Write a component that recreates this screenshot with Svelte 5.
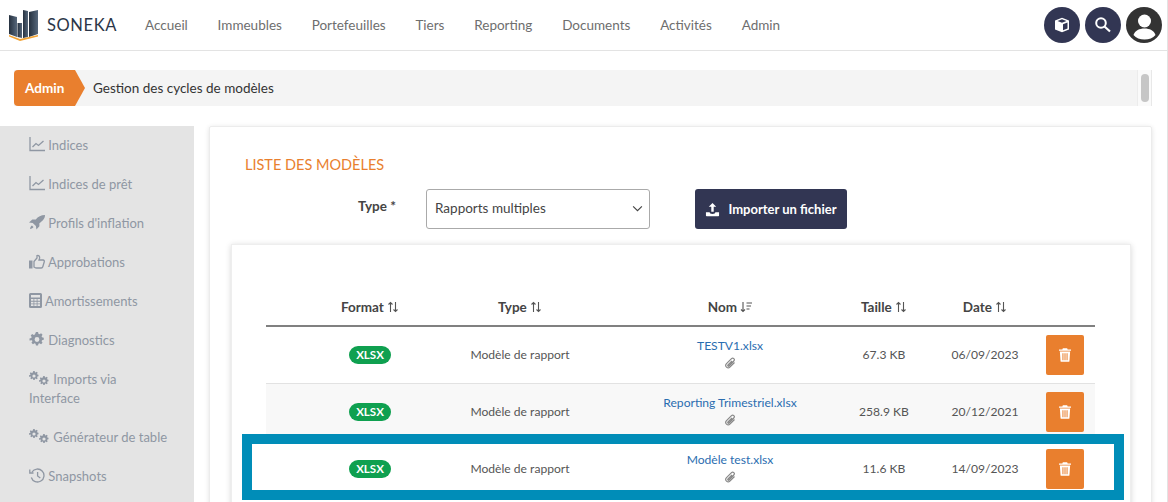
<script>
    const nav = ["Accueil", "Immeubles", "Portefeuilles", "Tiers", "Reporting", "Documents", "Activités", "Admin"];

    const side = [
        { label: "Indices", icon: "chart" },
        { label: "Indices de prêt", icon: "chart" },
        { label: "Profils d'inflation", icon: "rocket" },
        { label: "Approbations", icon: "thumb" },
        { label: "Amortissements", icon: "calc" },
        { label: "Diagnostics", icon: "gear" },
        { label: "Imports via Interface", icon: "gears" },
        { label: "Générateur de table", icon: "gears" },
        { label: "Snapshots", icon: "history" }
    ];

    const rows = [
        { name: "TESTV1.xlsx", size: "67.3 KB", date: "06/09/2023" },
        { name: "Reporting Trimestriel.xlsx", size: "258.9 KB", date: "20/12/2021" },
        { name: "Modèle test.xlsx", size: "11.6 KB", date: "14/09/2023" }
    ];

    const gearPath = "M8.600 0h2.800l.5 2.300 1.500.6 2-1.300 2 2-1.300 2 .6 1.500 2.300.5v2.800l-2.300.5-.6 1.500 1.300 2-2 2-2-1.300-1.500.6-.5 2.300H8.600l-.5-2.300-1.500-.6-2 1.300-2-2 1.300-2-.6-1.500L0 11.400V8.600l2.300-.5.6-1.500-1.300-2 2-2 2 1.300 1.500-.6zM10 6.800a3.200 3.200 0 1 0 0 6.400 3.200 3.200 0 0 0 0-6.400z";
</script>

{#snippet sortIcon()}
    <svg class="sort" viewBox="0 0 12 12" aria-hidden="true">
        <path d="M3.500 11V1.500M1.500 3.500l2-2 2 2M8.500 1v9.500M6.500 8.500l2 2 2-2" />
    </svg>
{/snippet}

{#snippet sideIcon(kind)}
    {#if kind === "chart"}
        <svg class="ic" viewBox="0 0 16 15"><path class="line" d="M1 0v13.500h15M3.500 10l3.500-3.500 2.500 2 5-4.500" /></svg>
    {:else if kind === "rocket"}
        <svg class="ic" viewBox="0 0 16 15"><path d="M16 0c-4 0-7 1.500-9.200 4.500H3.300L0 7.500l3.700.4 3.200 3 .5 3.600 3-3.200V8.200C13.300 6 16 4 16 0zM3 10.500c-1.200.6-1.800 2-2 3.500 1.600-.2 3-.8 3.500-2z" /></svg>
    {:else if kind === "thumb"}
        <svg class="ic" viewBox="0 0 16 15"><rect x="0" y="6.500" width="3.500" height="8" /><path class="line" d="M5 7.500l3-3.500V1.500c1.800-.6 3 1 2.500 3L10 6h4c1.200 0 1.500 1 1.200 2l-1.400 4.800c-.2.700-.7 1.200-1.500 1.200H7.500c-1 0-1.800-.6-2.500-1z" /></svg>
    {:else if kind === "calc"}
        <svg class="ic calc" viewBox="0 0 13 15"><path fill-rule="evenodd" d="M1.500 0h10A1.500 1.500 0 0 1 13 1.500v12a1.500 1.500 0 0 1-1.500 1.500h-10A1.500 1.500 0 0 1 0 13.500v-12A1.500 1.500 0 0 1 1.500 0zM2 2v2.500h9V2zM2 6v1.800h2.500V6zM5.300 6v1.800h2.400V6zM8.500 6v1.800H11V6zM2 8.700v1.800h2.500V8.700zM5.300 8.700v1.800h2.400V8.700zM8.500 8.700v1.800H11V8.700zM2 11.300V13h2.500v-1.700zM5.300 11.300V13h2.400v-1.700zM8.500 11.300V13H11v-1.700z" /></svg>
    {:else if kind === "gear"}
        <svg class="ic gear" viewBox="0 0 20 20"><path fill-rule="evenodd" d={gearPath} /></svg>
    {:else if kind === "gears"}
        <svg class="ic gears" viewBox="0 0 21 15">
            <path fill-rule="evenodd" transform="scale(.5)" d={gearPath} />
            <path fill-rule="evenodd" transform="translate(10 5) scale(.5)" d={gearPath} />
        </svg>
    {:else}
        <svg class="ic" viewBox="0 0 16 15"><path class="line" d="M3 4a6.500 6.500 0 1 1-.7 5.500M.8 1.500V5h3.700M8.600 4v4l2.700 2" /></svg>
    {/if}
{/snippet}

<div class="page">
    <header class="topbar">
        <div class="brand">
            <svg class="logo" viewBox="0 0 29 32" aria-hidden="true">
                <defs>
                    <linearGradient id="bld" x1="0" y1="0" x2="1" y2="0">
                        <stop offset="0" stop-color="#26313f" />
                        <stop offset="1" stop-color="#56677b" />
                    </linearGradient>
                </defs>
                <path fill="url(#bld)" d="M0 6l8 2v20l-8-3z" />
                <path fill="url(#bld)" d="M8.500 14H13v15l-4.500-1z" />
                <path fill="url(#bld)" d="M14 1l5 1v26l-5 1z" />
                <path fill="url(#bld)" d="M20 3l9-2v24l-9 3z" />
                <path fill="#f2a233" d="M0 26l11 4 18-4v1.500L11 32 0 27.500z" />
            </svg>
            <span>SONEKA</span>
        </div>
        <nav class="menu">
            {#each nav as item}
                <span>{item}</span>
            {/each}
        </nav>
        <div class="actions">
            <button class="round" aria-label="Paquet">
                <svg viewBox="0 0 16 16" width="16" height="16"><path fill="#fff" d="M8 .8l7 2.700v9L8 15.200 1 12.500v-9zM3.500 4L8 5.800 12.500 4 8 2.300z" /><path fill="#323653" d="M9 7.200l4.500-1.800v6L9 13.200z" /></svg>
            </button>
            <button class="round" aria-label="Rechercher">
                <svg viewBox="0 0 18 18" width="18" height="18"><circle cx="7" cy="7" r="4.800" fill="none" stroke="#fff" stroke-width="2" /><path d="M10.500 10.500l5.500 5" stroke="#fff" stroke-width="2.200" /></svg>
            </button>
            <button class="round user" aria-label="Profil">
                <svg viewBox="0 0 35 35" width="35" height="35"><circle cx="17.500" cy="13" r="6.500" fill="#fff" /><path fill="#fff" d="M6.500 27c1.500-4.500 6-6.500 11-6.500s9.500 2 11 6.500c-2.500 3-6.500 4.500-11 4.500s-8.500-1.500-11-4.500z" /></svg>
            </button>
        </div>
    </header>

    <div class="crumbs">
        <div class="chip">Admin</div>
        <div class="crumb-text">Gestion des cycles de modèles</div>
        <div class="crumb-scroll"><div class="thumb"></div></div>
    </div>

    <div class="body">
        <aside class="sidebar">
            {#each side as item}
                <div class="side-item">
                    {@render sideIcon(item.icon)}
                    {item.label}
                </div>
            {/each}
        </aside>

        <main class="card">
            <h2>LISTE DES MODÈLES</h2>
            <div class="filters">
                <span class="field-label">Type *</span>
                <div class="select">
                    <span>Rapports multiples</span>
                    <svg viewBox="0 0 12 8" width="11" height="7"><path d="M1 1.500l5 5 5-5" fill="none" stroke="#444" stroke-width="1.300" /></svg>
                </div>
                <button class="import">
                    <svg viewBox="0 0 16 16" width="15" height="15"><path fill="#fff" d="M8 1l4 4H9.300v5.500H6.700V5H4zM1 11h4c0 1 1 1.800 3 1.800s3-.8 3-1.800h4v3.500a.8.8 0 0 1-.8.800H1.800a.8.8 0 0 1-.8-.8z" /></svg>
                    Importer un fichier
                </button>
            </div>

            <div class="panel">
                <div class="table">
                    <div class="thead grid">
                        <div class="c-format">Format {@render sortIcon()}</div>
                        <div>Type {@render sortIcon()}</div>
                        <div>Nom
                            <svg class="sort" viewBox="0 0 12 12" aria-hidden="true"><path d="M3 1v9.500M1 8.500l2 2 2-2M6.500 2H12M6.500 5H11M6.500 8h3" /></svg>
                        </div>
                        <div class="c-size">Taille {@render sortIcon()}</div>
                        <div>Date {@render sortIcon()}</div>
                        <div></div>
                    </div>
                    {#each rows as row, i}
                        <div class="row grid" class:odd={i % 2 === 1}>
                            <div class="c-format"><span class="badge">XLSX</span></div>
                            <div>Modèle de rapport</div>
                            <div class="name">
                                <a href="#top">{row.name}</a>
                                <svg class="clip" viewBox="0 0 12 12"><path d="M10.500 5.500l-4.600 4.600a2.400 2.400 0 0 1-3.400-3.400l5-5a1.600 1.600 0 0 1 2.300 2.300L5 9a.7.7 0 0 1-1-1l4-4" /></svg>
                            </div>
                            <div class="c-size">{row.size}</div>
                            <div>{row.date}</div>
                            <div class="c-del">
                                <button class="del" aria-label="Supprimer">
                                    <svg viewBox="0 0 14 16" width="12" height="14"><path fill="#fff" fill-rule="evenodd" d="M4.500 0h5l.6 1.500H14V3H0V1.500h3.900zM1 4h12l-.8 11a1 1 0 0 1-1 1H2.800a1 1 0 0 1-1-1zM4 6v8h1.200V6zM6.400 6v8h1.200V6zM8.800 6v8H10V6z" /></svg>
                                </button>
                            </div>
                        </div>
                    {/each}
                </div>
                <div class="highlight"></div>
            </div>
        </main>
    </div>
</div>

<style>
    :global(body) {
        margin: 0;
        background: #fff;
    }

    .page {
        height: 502px;
        overflow: hidden;
        font-family: Lato, "Open Sans", sans-serif;
        color: #444;
        border-right: 1px solid #e3e3e3;
        box-sizing: border-box;
    }

    .topbar {
        height: 51px;
        box-sizing: border-box;
        border-bottom: 1px solid #e3e3e3;
        display: flex;
        align-items: center;
        padding: 0 5px 0 9px;
    }

    .brand {
        display: flex;
        align-items: center;
        gap: 9px;
        font-size: 16.500px;
        letter-spacing: 0.6px;
        color: #2b3648;
        width: 136px;
    }

    .logo {
        width: 29px;
        height: 32px;
    }

    .menu {
        display: flex;
        gap: 29.800px;
        font-size: 13.500px;
        color: #6e6e6e;
    }

    .actions {
        margin-left: auto;
        display: flex;
        gap: 5px;
    }

    .round {
        width: 36px;
        height: 36px;
        border: 0;
        padding: 0;
        border-radius: 50%;
        background: #323653;
        display: flex;
        align-items: center;
        justify-content: center;
    }

    .user {
        background: #333;
    }

    .crumbs {
        margin: 19px 15px 0 14px;
        height: 36px;
        display: flex;
        align-items: center;
        background: #f4f4f4;
        font-size: 13.500px;
        color: #333;
    }

    .chip {
        width: 71px;
        height: 36px;
        box-sizing: border-box;
        padding-left: 11px;
        line-height: 36px;
        color: #fff;
        font-weight: 700;
        background: #e97f2e;
        border-radius: 4px 0 0 4px;
        clip-path: polygon(0 0, 61px 0, 71px 50%, 61px 100%, 0 100%);
    }

    .crumb-text {
        margin-left: 8px;
    }

    .crumb-scroll {
        margin-left: auto;
        width: 13px;
        height: 36px;
        background: #fafafa;
        border-left: 1px solid #ececec;
        border-right: 1px solid #e8e8e8;
        display: flex;
        justify-content: center;
        align-items: center;
        box-sizing: content-box;
    }

    .thumb {
        width: 8px;
        height: 28px;
        border-radius: 4px;
        background: #c6c6c6;
    }

    .body {
        margin-top: 20px;
        display: flex;
        align-items: flex-start;
    }

    .sidebar {
        width: 194px;
        height: 376px;
        background: #e4e4e4;
        padding: 10px 25px 0 29px;
        box-sizing: border-box;
        font-size: 13px;
        line-height: 19px;
        color: #8f97a3;
        flex: none;
    }

    .side-item {
        margin-bottom: 20px;
    }

    .ic {
        width: 16px;
        height: 15px;
        vertical-align: -2px;
        fill: #8f97a3;
    }

    .calc {
        width: 13px;
    }

    .gears {
        width: 21px;
    }

    .line {
        fill: none;
        stroke: #8f97a3;
        stroke-width: 1.300;
    }

    .card {
        margin-left: 15px;
        width: 943px;
        height: 400px;
        box-sizing: border-box;
        border: 1px solid #ececec;
        border-radius: 2px;
        box-shadow: 0 1px 5px rgb(0 0 0 / 0.12);
        padding: 0 21px;
    }

    h2 {
        margin: 29px 0 0 14px;
        font-size: 14.500px;
        line-height: 18px;
        font-weight: 400;
        color: #e97f2e;
    }

    .filters {
        margin-top: 15px;
        display: flex;
        align-items: flex-start;
    }

    .field-label {
        margin: 9px 0 0 127px;
        width: 68px;
        font-size: 13.500px;
        font-weight: 700;
        color: #444;
    }

    .select {
        width: 224px;
        height: 40px;
        box-sizing: border-box;
        border: 1px solid #aaa;
        border-radius: 3px;
        padding: 0 6px 2px 8px;
        display: flex;
        align-items: center;
        justify-content: space-between;
        font-size: 13.500px;
        color: #444;
    }

    .import {
        margin-left: 45px;
        width: 152px;
        height: 40px;
        border: 0;
        border-radius: 3px;
        background: #323653;
        color: #fff;
        font: 700 13px Lato, sans-serif;
        display: flex;
        align-items: center;
        justify-content: center;
        gap: 8px;
    }

    .panel {
        position: relative;
        margin-top: 15px;
        height: 300px;
        width: 900px;
        box-sizing: border-box;
        border: 1px solid #eee;
        box-shadow: 0 1px 6px rgb(0 0 0 / 0.16);
        padding: 0 35px 0 34px;
    }

    .grid {
        display: grid;
        grid-template-columns: 164px 180px 240px 80px 110px 55px;
        text-align: center;
        align-items: center;
    }

    .thead {
        margin-top: 49px;
        box-sizing: content-box;
        height: 24px;
        padding: 5px 0 2px;
        border-bottom: 2px solid #808080;
        font-size: 13.500px;
        font-weight: 700;
        color: #444;
        align-items: start;
    }

    .row {
        height: 57px;
        box-sizing: border-box;
        border-bottom: 1px solid #e2e2e2;
        padding-bottom: 2px;
        font-size: 12.100px;
        color: #555;
    }

    .odd {
        background: #f8f8f8;
    }

    .c-format {
        padding-left: 44px;
    }

    .row .c-format {
        margin-top: 2px;
    }

    .c-size {
        padding-right: 12px;
    }

    .c-del {
        display: flex;
        padding-left: 6px;
        margin-top: 2px;
    }

    .sort {
        width: 12px;
        height: 12px;
        vertical-align: -1px;
        fill: none;
        stroke: #555;
        stroke-width: 1.100;
    }

    .badge {
        display: inline-block;
        background: #0fa050;
        color: #fff;
        font-size: 11.500px;
        font-weight: 700;
        line-height: 18px;
        padding: 0 7px;
        border-radius: 9px;
        vertical-align: middle;
    }

    .name {
        display: flex;
        flex-direction: column;
        align-items: center;
        gap: 3px;
        margin-bottom: 2px;
    }

    .name a {
        color: #2a6db0;
        text-decoration: none;
        line-height: 16px;
    }

    .clip {
        width: 12px;
        height: 12px;
        fill: none;
        stroke: #888;
        stroke-width: 1.200;
    }

    .del {
        width: 38px;
        height: 40px;
        border: 0;
        padding: 0;
        border-radius: 2px;
        background: #e97f2e;
        display: flex;
        align-items: center;
        justify-content: center;
    }

    .highlight {
        position: absolute;
        left: 10px;
        top: 189px;
        width: 882px;
        height: 66px;
        box-sizing: border-box;
        border: 10px solid #008db8;
    }
</style>
